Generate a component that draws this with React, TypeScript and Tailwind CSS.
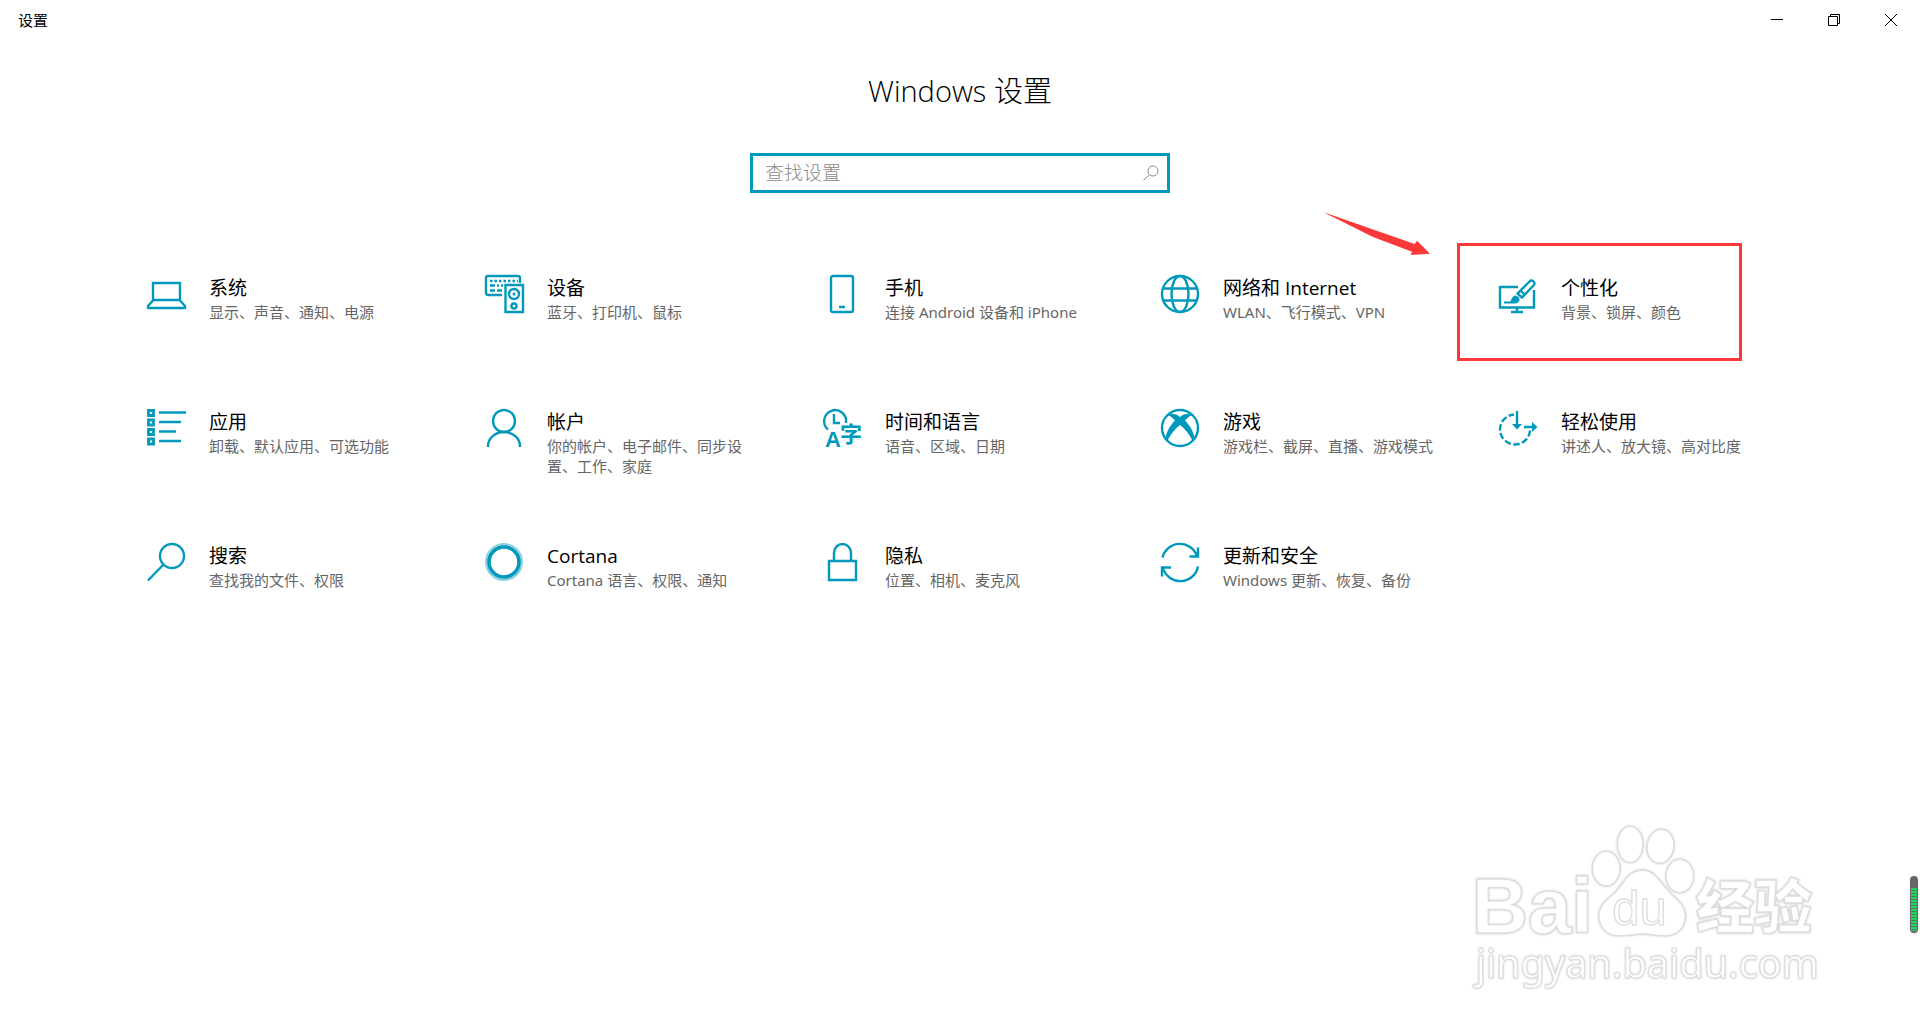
import type { ReactNode } from 'react';

function Icon({ children }: { children: ReactNode }) {
  return (
    <svg
      aria-hidden="true"
      viewBox="0 0 39 39"
      className="h-[39px] w-[39px] shrink-0 overflow-visible text-[#0099bc]"
      fill="none"
      stroke="currentColor"
      strokeWidth="2.400"
    >
      {children}
    </svg>
  );
}

const SystemIcon = (
  <Icon>
    <path d="M6 25V8h27v17z" />
    <path d="M6 25.5 1 31v2h37v-2l-5-5.5" strokeLinejoin="round" />
  </Icon>
);

const DevicesIcon = (
  <Icon>
    <path d="M17 20H3a2 2 0 0 1-2-2V3a2 2 0 0 1 2-2h30a2 2 0 0 1 2 2v5" />
    <path d="M5 6h28" strokeDasharray="2.500 2" />
    <path d="M5 10.5h5M12 10.5h2M16 10.5h2M5 15.5h5M12 15.5h5" />
    <path d="M20.500 10H38v27H20.500z" />
    <circle cx="29" cy="19" r="5" />
    <circle cx="29" cy="19" r="1.500" fill="currentColor" stroke="none" />
    <circle cx="29" cy="31" r="2.500" />
  </Icon>
);

const PhoneIcon = (
  <Icon>
    <rect x="8" y="1" width="22" height="36" rx="2" />
    <path d="M16 32h6" strokeWidth="2.500" />
  </Icon>
);

const GlobeIcon = (
  <Icon>
    <circle cx="19" cy="19" r="18" />
    <ellipse cx="19" cy="19" rx="8.500" ry="18" />
    <path d="M2 13.500h34M2 25.500h34" />
  </Icon>
);

const PersonalizeIcon = (
  <Icon>
    <path d="M19 12H1v20.500h34V15M18 33v4M12 37h12" />
    <path d="m18.500 18.500 12-12a2 2 0 0 1 4 4L23 22.500z" strokeLinejoin="round" />
    <path d="m22 16 4 4" />
    <path d="M5 28.500V26.500h6c1.500 0 1.500-6 5.500-6 6 1 5 8-1 8z" fill="currentColor" stroke="none" />
  </Icon>
);

const AppsIcon = (
  <Icon>
    <path d="M1.500 1.500h5v5h-5zM1.500 11h5v5h-5zM1.500 20.500h5v5h-5zM1.500 30h5v5h-5z" strokeWidth="2.800" />
    <path d="M12 3.500h27M12 13h22M12 22.500h17M12 32h22" strokeWidth="2.500" />
  </Icon>
);

const AccountIcon = (
  <Icon>
    <circle cx="19" cy="12" r="11" />
    <path d="M3 38v-1a16 14 0 0 1 32 0v1" />
  </Icon>
);

const TimeIcon = (
  <Icon>
    <path d="M5 20.500A11 11 0 1 1 23 14M11 5v9h6" />
    <text x="2" y="38" className="font-['Liberation_Sans'] text-[22px] font-bold" fill="currentColor" stroke="none">
      A
    </text>
    <text x="17" y="33" className="font-['Noto_Sans_CJK_SC'] text-[22px] font-bold" fill="currentColor" stroke="none">
      字
    </text>
  </Icon>
);

const XboxIcon = (
  <Icon>
    <circle cx="19" cy="19" r="18" />
    <path
      d="M6 6.500C10 3.500 15 5 19 8c4-3 9-4.500 13-1.500-2-.5-5 1.500-8 5 5 5 9.500 13 9.500 18.500l-2 2C29 26 24 20 19 16 14 20 9 26 6.500 32l-2-2C4.500 24.500 9 16.500 14 11.500 11 8 8 6 6 6.500z"
      fill="currentColor"
      stroke="none"
    />
  </Icon>
);

const EaseIcon = (
  <Icon>
    <path d="M15 5.500A15 15 0 1 0 31 21.500" strokeDasharray="6.500 2.500" strokeDashoffset="1" />
    <path d="M18 2v15M25 18h9" />
    <path d="M13 15h10l-5 5.500zM33 13l5.500 5-5.500 5z" fill="currentColor" stroke="none" />
  </Icon>
);

const SearchIcon = (
  <Icon>
    <circle cx="25" cy="13" r="12" />
    <path d="M16.500 21.500 1 37.500" />
  </Icon>
);

const CortanaIcon = (
  <Icon>
    <circle cx="19" cy="19" r="17.500" className="text-[#8fd0e0]" strokeWidth="3" />
    <circle cx="19" cy="19" r="15" strokeWidth="3.500" />
  </Icon>
);

const LockIcon = (
  <Icon>
    <path d="M6 18h27v19H6zM11 18v-8a8.500 9 0 0 1 17 0v8" />
  </Icon>
);

const UpdateIcon = (
  <Icon>
    <path d="M1.500 14.500A18 18 0 0 1 36 13M37 4.500V13.500H28.500" />
    <path d="M37 23.500A18 18 0 0 1 2 25M1 33.500V24.500h9" />
  </Icon>
);

const categories = [
  { icon: SystemIcon, title: '系统', text: '显示、声音、通知、电源' },
  { icon: DevicesIcon, title: '设备', text: '蓝牙、打印机、鼠标' },
  { icon: PhoneIcon, title: '手机', text: '连接 Android 设备和 iPhone' },
  { icon: GlobeIcon, title: '网络和 Internet', text: 'WLAN、飞行模式、VPN' },
  { icon: PersonalizeIcon, title: '个性化', text: '背景、锁屏、颜色', marked: true },
  { icon: AppsIcon, title: '应用', text: '卸载、默认应用、可选功能' },
  { icon: AccountIcon, title: '帐户', text: '你的帐户、电子邮件、同步设置、工作、家庭' },
  { icon: TimeIcon, title: '时间和语言', text: '语音、区域、日期' },
  { icon: XboxIcon, title: '游戏', text: '游戏栏、截屏、直播、游戏模式' },
  { icon: EaseIcon, title: '轻松使用', text: '讲述人、放大镜、高对比度' },
  { icon: SearchIcon, title: '搜索', text: '查找我的文件、权限' },
  { icon: CortanaIcon, title: 'Cortana', text: 'Cortana 语言、权限、通知' },
  { icon: LockIcon, title: '隐私', text: '位置、相机、麦克风' },
  { icon: UpdateIcon, title: '更新和安全', text: 'Windows 更新、恢复、备份' },
];

function Marker() {
  return (
    <>
      <span className="pointer-events-none absolute -top-8 -left-2.5 h-[118px] w-[285px] border-3 border-[#fc3938]" />
      <svg
        aria-hidden="true"
        viewBox="0 0 324 132"
        className="pointer-events-none absolute -top-[63px] -left-36 h-11 w-[108px]"
        fill="#fc3938"
      >
        <path d="M0 0 275 96 282 86 321 125 263 129 267 119 150 75z" />
      </svg>
    </>
  );
}

function Watermark() {
  return (
    <svg
      viewBox="60 60 1060 520"
      className="pointer-events-none absolute right-24 bottom-9 w-[353px] drop-shadow-[0_0_1px_#c4c4c4]"
      fill="#fff"
      stroke="#dedede"
      strokeWidth="4"
    >
      <text x="62" y="396" className="font-['Liberation_Sans'] text-[234px] font-bold">
        Bai
      </text>
      <ellipse cx="466" cy="203" rx="41" ry="52" />
      <ellipse cx="538" cy="130" rx="38" ry="54" />
      <ellipse cx="629" cy="136" rx="40" ry="51" transform="rotate(8 629 136)" />
      <ellipse cx="687" cy="225" rx="41" ry="50" />
      <path d="M575 208c-50 0-58 52-95 78-40 30-42 64-28 90 24 42 72 26 122 22 50 4 98 20 122-22 14-30 8-60-24-86-38-30-52-82-97-82z" />
      <text x="484" y="372" className="font-['Liberation_Sans'] text-[147px]">
        du
      </text>
      <text x="736" y="382" className="font-['Noto_Sans_CJK_SC'] text-[174px] font-black">
        经验
      </text>
      <text x="74" y="532" className="font-['Noto_Sans'] text-[119px]" strokeWidth="3">
        jingyan.baidu.com
      </text>
    </svg>
  );
}

export default function App() {
  return (
    <div className="relative flex min-h-screen flex-col overflow-hidden bg-white font-['Open_Sans','Noto_Sans_CJK_SC',sans-serif] text-black">
      <header className="flex h-10 items-center justify-between pr-px pl-[18px]">
        <span className="text-[15px] leading-5">设置</span>
        <div className="flex h-full">
          <button aria-label="最小化" className="flex w-[57px] items-center justify-center">
            <svg viewBox="0 0 12 12" className="h-3 w-3" stroke="#000">
              <path d="M0 5.500h12" />
            </svg>
          </button>
          <button aria-label="还原" className="flex w-[57px] items-center justify-center">
            <svg viewBox="0 0 12 12" className="h-3 w-3" stroke="#000" fill="none">
              <path d="M.5 2.500h9v9h-9zM2.500 2.500v-2h9v9h-2" />
            </svg>
          </button>
          <button aria-label="关闭" className="flex w-[57px] items-center justify-center">
            <svg viewBox="0 0 12 12" className="h-3 w-3" stroke="#000">
              <path d="m0 0 12 12M12 0 0 12" />
            </svg>
          </button>
        </div>
      </header>

      <main className="flex flex-col items-center">
        <h1 className="mt-[31px] text-[29px] leading-10 font-light">Windows 设置</h1>
        <label className="mt-[42px] flex h-10 w-[420px] items-center border-3 border-[#0099bc] pr-2 pl-3">
          <input
            type="text"
            aria-label="查找设置"
            placeholder="查找设置"
            className="min-w-0 flex-1 text-[19px] leading-6 font-light outline-none placeholder:text-[#8a8a8a]"
          />
          <svg aria-hidden="true" viewBox="0 0 16 16" className="h-4 w-4" fill="none" stroke="#8a8a8a">
            <circle cx="10" cy="6" r="5" />
            <path d="M6.500 9.500.5 15.500" />
          </svg>
        </label>

        <nav className="mt-[82px] grid w-full max-w-[1690px] auto-rows-[110px] grid-cols-5 gap-y-6">
          {categories.map((c) => (
            <a key={c.title} href="#" className="relative flex items-start gap-[23px] pr-6 pl-8">
              {c.icon}
              <span className="flex min-w-0 flex-col gap-0.5 pt-px">
                <span className="text-[19px] leading-6">{c.title}</span>
                <span className="font-['Noto_Sans','Noto_Sans_CJK_SC',sans-serif] text-[15px] leading-5 text-[#666]">
                  {c.text}
                </span>
              </span>
              {c.marked && <Marker />}
            </a>
          ))}
        </nav>
      </main>

      <Watermark />
      <div className="absolute right-0.5 bottom-[97px] h-[57px] w-2 rounded-full bg-[#666] px-px pt-3 pb-0.5 shadow">
        <div className="h-full bg-[repeating-linear-gradient(#22d35e_0_2px,#5a7a62_2px_3px)]" />
      </div>
    </div>
  );
}
